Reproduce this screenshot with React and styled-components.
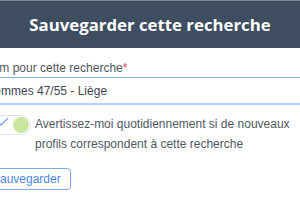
import React from "react";
import styled, { createGlobalStyle } from "styled-components";

const GlobalStyle = createGlobalStyle`
  html, body {
    margin: 0;
    padding: 0;
    background: #ffffff;
    overflow: hidden;
  }
`;

const Page = styled.div`
  width: 300px;
  height: 200px;
  overflow: hidden;
  background: #ffffff;
`;

const Header = styled.div`
  height: 47px;
  border-top: 1px solid #7d8894;
  background: #3e4d5f;
  display: flex;
  align-items: center;
  justify-content: center;
`;

const Title = styled.h2`
  margin: 0;
  font-family: "Open Sans", sans-serif;
  font-weight: 700;
  font-size: 16.8px;
  color: #ffffff;
`;

const Form = styled.div`
  margin-left: -16px;
  width: 360px;
  padding-top: 12px;
  display: flex;
  flex-direction: column;
  font-family: "Liberation Sans", Arial, sans-serif;
  color: #4f5761;
`;

const Label = styled.label`
  font-size: 12px;
  line-height: 16px;
`;

const Required = styled.span`
  color: #e53939;
`;

const Input = styled.div`
  margin-top: 1px;
  height: 25px;
  border-top: 1px solid #87b1f0;
  border-bottom: 2px solid #b6cff7;
  padding-left: 3px;
  display: flex;
  align-items: center;
  font-size: 12px;
  color: #3f4650;
`;

const ToggleRow = styled.div`
  margin-top: 10px;
  display: flex;
  align-items: flex-start;
  gap: 4px;
`;

const Track = styled.div`
  flex: none;
  width: 47px;
  height: 20px;
  box-sizing: border-box;
  border: 1px solid #dfe4ea;
  border-radius: 10px;
  background: #ffffff;
  display: flex;
  align-items: center;
  justify-content: flex-end;
  gap: 5px;
  padding-right: 1px;
`;

const Check = styled.svg`
  margin-top: -7px;
`;

const Knob = styled.div`
  width: 16px;
  height: 16px;
  border-radius: 50%;
  background: #c8e79c;
`;

const ToggleText = styled.div`
  font-size: 12px;
  line-height: 20px;
  width: 262px;
  margin-top: -1px;
`;

const Button = styled.button`
  align-self: flex-start;
  box-sizing: border-box;
  margin-top: 14px;
  height: 22px;
  padding: 0 9px 0 7px;
  border: 1px solid #7ea9ef;
  border-radius: 4px;
  background: #ffffff;
  color: #4a88e8;
  font-family: "Liberation Sans", Arial, sans-serif;
  font-size: 12px;
`;

export default function App() {
  return (
    <Page>
      <GlobalStyle />
      <Header>
        <Title>Sauvegarder cette recherche</Title>
      </Header>
      <Form>
        <Label>
          Nom pour cette recherche<Required>*</Required>
        </Label>
        <Input>Femmes 47/55 - Liège</Input>
        <ToggleRow>
          <Track>
            <Check width="10" height="8" viewBox="0 0 10 8">
              <path d="M0.5 4.5 L3 7 L9.5 0.8" fill="none" stroke="#7da6e6" strokeWidth="1.3" strokeLinecap="round" />
            </Check>
            <Knob />
          </Track>
          <ToggleText>
            Avertissez-moi quotidiennement si de nouveaux profils correspondent à cette recherche
          </ToggleText>
        </ToggleRow>
        <Button>Sauvegarder</Button>
      </Form>
    </Page>
  );
}
